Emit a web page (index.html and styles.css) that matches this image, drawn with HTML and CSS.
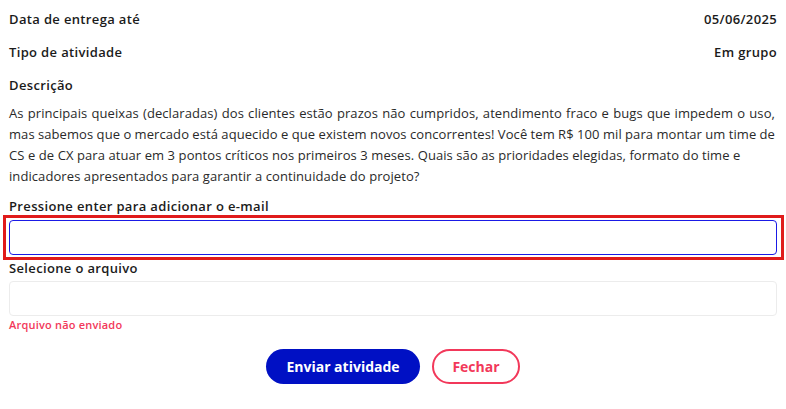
FILE: index.html
```html
<!DOCTYPE html>
<html lang="pt-BR">
<head>
<meta charset="utf-8">
<link rel="stylesheet" href="styles.css">
</head>
<body>
<div class="page">
  <div class="row">
    <span class="label">Data de entrega até</span>
    <span class="label">05/06/2025</span>
  </div>
  <div class="row">
    <span class="label">Tipo de atividade</span>
    <span class="label">Em grupo</span>
  </div>
  <div class="row">
    <span class="label">Descrição</span>
  </div>
  <p class="desc"><span class="line fill">As principais queixas (declaradas) dos clientes estão prazos não cumpridos, atendimento fraco e bugs que impedem o uso,</span> <span class="line fill">mas sabemos que o mercado está aquecido e que existem novos concorrentes! Você tem R$ 100 mil para montar um time de</span> <span class="line">CS e de CX para atuar em 3 pontos críticos nos primeiros 3 meses. Quais são as prioridades elegidas, formato do time e</span> <span class="line">indicadores apresentados para garantir a continuidade do projeto?</span></p>
  <label class="field-label" for="email">Pressione enter para adicionar o e-mail</label>
  <div class="focus-ring">
    <input id="email" class="input" type="text">
  </div>
  <label class="field-label second">Selecione o arquivo</label>
  <div class="file-box"></div>
  <div class="error">Arquivo não enviado</div>
  <div class="actions">
    <button class="btn primary">Enviar atividade</button>
    <button class="btn outline">Fechar</button>
  </div>
</div>
</body>
</html>
```

FILE: styles.css
```css
* { box-sizing: border-box; }
html, body { margin: 0; padding: 0; background: #fff; }
body {
  font-family: "Open Sans", "Noto Sans", sans-serif;
  color: #222;
}
.page {
  padding: 10px 9px 0 9px;
  display: flex;
  flex-direction: column;
}
.row {
  display: flex;
  justify-content: space-between;
  height: 33px;
  align-items: flex-start;
}
.label {
  font-size: 13px;
  font-weight: 600;
  line-height: 18px;
  letter-spacing: 0.35px;
  color: #1b1b1b;
}
.desc {
  margin: -6px 0 0 0;
  font-size: 13px;
  line-height: 21px;
  letter-spacing: 0.08px;
  color: #2a2a2a;
}
.line {
  display: block;
  white-space: nowrap;
}
.line.fill {
  width: 766px;
  word-spacing: -0.8px;
  white-space: normal;
  text-align: justify;
  text-align-last: justify;
}
.field-label {
  margin-top: 10px;
  font-size: 13px;
  font-weight: 600;
  line-height: 18px;
  letter-spacing: 0.35px;
  color: #1b1b1b;
}
.field-label.second { margin-top: -1px; }
.focus-ring {
  margin: 0 -7px 0 -6px;
  border: 3px solid #e01b1b;
  padding: 2px 4px 2px 3px;
}
.input {
  display: block;
  height: 35px;
  width: 100%;
  border: 1px solid #1a1ae6;
  border-radius: 4px;
  background: #fff;
  outline: none;
}
.file-box {
  margin-top: 4px;
  height: 35px;
  border: 1px solid #ececec;
  border-radius: 4px;
}
.error {
  margin-top: 1px;
  font-size: 11px;
  font-weight: 600;
  line-height: 16px;
  letter-spacing: 0.2px;
  color: #f2385a;
}
.actions {
  margin-top: 16px;
  display: flex;
  justify-content: center;
  gap: 12px;
}
.btn {
  height: 35px;
  border-radius: 18px;
  font-family: inherit;
  font-size: 14px;
  font-weight: 700;
  cursor: pointer;
}
.primary {
  width: 154px;
  background: #0010c4;
  color: #fff;
  border: none;
}
.outline {
  width: 88px;
  background: #fff;
  color: #f2385a;
  border: 2px solid #f2385a;
}
```
